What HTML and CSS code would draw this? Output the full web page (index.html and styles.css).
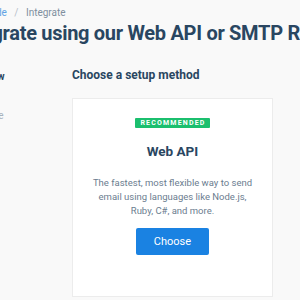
FILE: index.html
```html
<!DOCTYPE html>
<html lang="en">
<head>
    <meta charset="UTF-8">
    <meta name="viewport" content="width=device-width, initial-scale=1.0">
    <title>Integrate</title>
    <link rel="stylesheet" href="styles.css">
</head>
<body>
    <div class="page">
        <header class="page-header">
            <div class="breadcrumb">
                <a href="#">Setup Guide</a>
                <span class="sep">/</span>
                <span class="current">Integrate</span>
            </div>
            <h1>Integrate using our Web API or SMTP Relay</h1>
        </header>

        <div class="layout">
            <nav class="sidebar">
                <a href="#" class="nav-item active">Overview</a>
                <a href="#" class="nav-item">Integrate</a>
            </nav>

            <main class="content">
                <h2>Choose a setup method</h2>
                <div class="card">
                    <span class="badge">Recommended</span>
                    <h3>Web API</h3>
                    <p>The fastest, most flexible way to send email using languages like Node.js, Ruby, C#, and more.</p>
                    <button type="button">Choose</button>
                </div>
            </main>
        </div>
    </div>
</body>
</html>
```

FILE: styles.css
```css
* {
    margin: 0;
    padding: 0;
    box-sizing: border-box;
    font-family: Roboto, "Liberation Sans", sans-serif;
}

html, body {
    overflow: hidden;
}

body {
    background: #f9f9f9;
    color: #294661;
}

.page {
    margin-left: -60px;
    width: 420px;
}

.page-header {
    padding-top: 6px;
}

.breadcrumb {
    padding-left: 13px;
    font-size: 10px;
    line-height: 14px;
    color: #7f8f9e;
}

.breadcrumb a {
    color: #5fa3e4;
    text-decoration: none;
}

.breadcrumb .sep {
    margin: 0 5px;
    color: #b6c0c9;
}

h1 {
    padding-left: 18px;
    font-size: 20px;
    line-height: 26px;
    font-weight: 700;
    white-space: nowrap;
    letter-spacing: -0.3px;
}

.layout {
    display: flex;
    margin-top: 20px;
}

.sidebar {
    width: 132px;
    display: flex;
    flex-direction: column;
    gap: 25px;
    padding-top: 4px;
    padding-left: 24px;
}

.nav-item {
    font-size: 10px;
    line-height: 14px;
    color: #a8b3bd;
    text-decoration: none;
}

.nav-item.active {
    font-weight: 700;
    color: #294661;
    margin-left: -1px;
}

.content {
    width: 201px;
}

h2 {
    font-size: 12px;
    line-height: 18px;
    font-weight: 700;
    margin-bottom: 14px;
}

.card {
    background: white;
    border: 1px solid #ececec;
    height: 199px;
    display: flex;
    flex-direction: column;
    align-items: center;
    padding-top: 19px;
    text-align: center;
}

.badge {
    background: #1bbf6e;
    color: white;
    font-size: 7px;
    line-height: 10px;
    font-weight: 700;
    letter-spacing: 1.2px;
    text-transform: uppercase;
    padding: 0 4px 0 5px;
    border-radius: 1px;
}

h3 {
    margin-top: 12px;
    font-size: 13.5px;
    line-height: 22px;
    font-weight: 700;
}

.card p {
    margin-top: 14px;
    padding: 0 14px;
    font-size: 9.5px;
    line-height: 14px;
    color: #6b7d8f;
}

button {
    margin-top: 10px;
    width: 73px;
    height: 27px;
    background: #1a82e2;
    border: none;
    border-radius: 2px;
    color: white;
    font-size: 11px;
    cursor: pointer;
}
```
